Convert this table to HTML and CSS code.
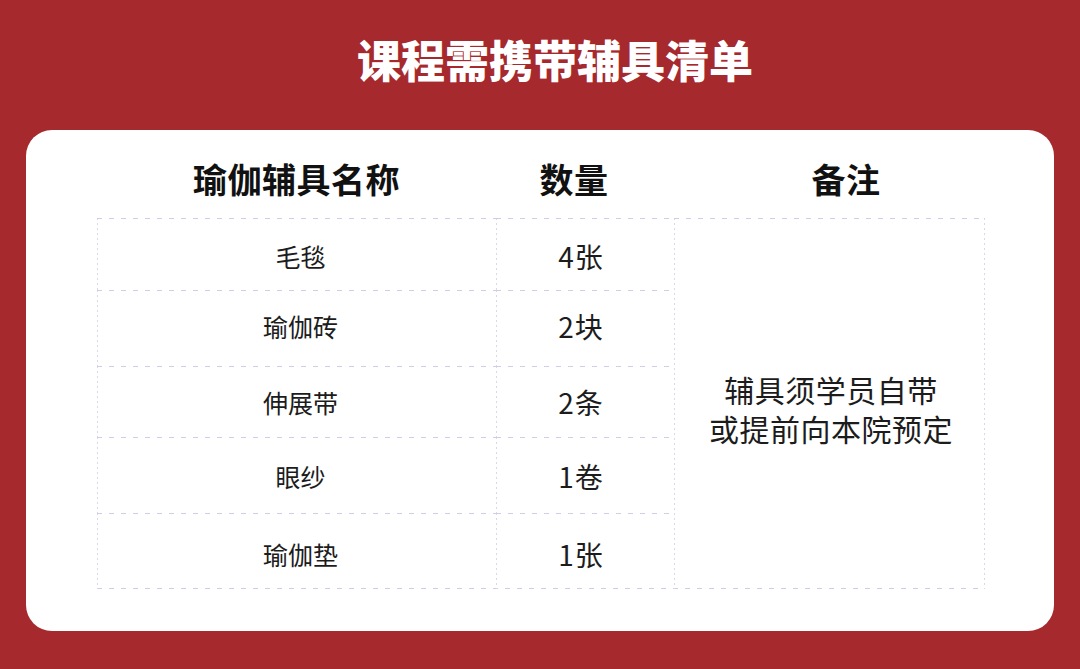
FILE: index.html
```html
<!DOCTYPE html>
<html lang="zh-CN">
<head>
<meta charset="utf-8">
<title>课程需携带辅具清单</title>
<link rel="stylesheet" href="styles.css">
</head>
<body>
<div class="page">
  <h1 class="title">课程需携带辅具清单</h1>
  <div class="card">
    <div class="head">
      <div class="hcell h1c">瑜伽辅具名称</div>
      <div class="hcell h2c">数量</div>
      <div class="hcell h3c">备注</div>
    </div>
    <div class="table">
      <div class="cell name r1">毛毯</div>
      <div class="cell qty r1">4张</div>
      <div class="cell remark"><p class="remark-text">辅具须学员自带<br>或提前向本院预定</p></div>
      <div class="cell name r2">瑜伽砖</div>
      <div class="cell qty r2">2块</div>
      <div class="cell name r3">伸展带</div>
      <div class="cell qty r3">2条</div>
      <div class="cell name r4">眼纱</div>
      <div class="cell qty r4">1卷</div>
      <div class="cell name r5">瑜伽垫</div>
      <div class="cell qty r5">1张</div>
    </div>
  </div>
</div>
</body>
</html>
```

FILE: styles.css
```css
html, body {
  margin: 0;
  padding: 0;
}
body {
  width: 1080px;
  height: 669px;
  overflow: hidden;
  background: #a5292d;
  font-family: "Noto Sans CJK SC", "Noto Sans", sans-serif;
}
.page {
  display: flex;
  flex-direction: column;
  padding-top: 37px;
}
.title {
  margin: 0 0 49px 0;
  padding-left: 30px;
  height: 44px;
  line-height: 44px;
  font-size: 44px;
  font-weight: 900;
  color: #ffffff;
  text-align: center;
  letter-spacing: 0;
}
.card {
  margin: 0 26px;
  height: 501px;
  background: #ffffff;
  border-radius: 26px;
  padding: 0 70px 0 71px;
  box-sizing: border-box;
}
.head {
  display: grid;
  grid-template-columns: 399px 178px 310px;
  padding-top: 29px;
  padding-bottom: 19px;
}
.hcell {
  height: 40px;
  line-height: 40px;
  font-size: 34px;
  font-weight: 700;
  color: #111111;
  text-align: center;
  letter-spacing: 0.5px;
}
.h2c { padding-right: 22px; }
.h3c { padding-left: 34px; }
.table {
  display: grid;
  grid-template-columns: 399px 178px 310px;
  grid-template-rows: 72px 76px 71px 76px 76px;
  width: 888px;
  background-image:
    repeating-linear-gradient(to right, #cdcfe6 0 5px, transparent 5px 12px),
    repeating-linear-gradient(to bottom, #d8d9e6 0 2px, transparent 2px 5px);
  background-size: 100% 1px, 1px 100%;
  background-position: left bottom, right top;
  background-repeat: no-repeat;
}
.cell {
  display: flex;
  align-items: center;
  justify-content: center;
  color: #1c1c1c;
  background-image:
    repeating-linear-gradient(to right, #cdcfe6 0 5px, transparent 5px 12px),
    repeating-linear-gradient(to bottom, #d8d9e6 0 2px, transparent 2px 5px);
  background-size: 100% 1px, 1px 100%;
  background-position: left top, left top;
  background-repeat: no-repeat;
}
.name {
  font-size: 25px;
  padding-left: 8px;
}
.qty {
  font-size: 28px;
  letter-spacing: 1px;
  padding-right: 8px;
}
.r1 { padding-top: 4px; }
.r2 { padding-bottom: 4px; }
.r3 { padding-top: 1px; }
.r4 { padding-top: 1px; }
.r5 { padding-top: 6px; }
.remark {
  grid-column: 3;
  grid-row: 1 / span 5;
  padding-top: 10px;
  padding-left: 4px;
}
.remark-text {
  margin: 0;
  font-size: 30px;
  line-height: 39px;
  letter-spacing: 0.5px;
  text-align: center;
}
```
